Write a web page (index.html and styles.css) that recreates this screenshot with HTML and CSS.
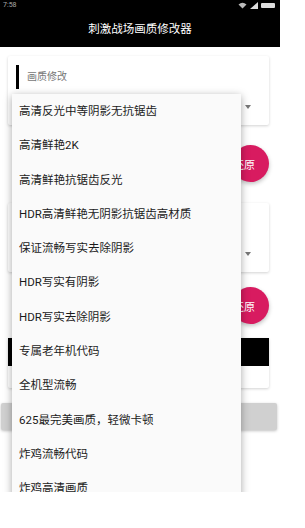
FILE: index.html
```html
<!DOCTYPE html>
<html lang="zh-CN">
<head>
    <meta charset="UTF-8">
    <meta name="viewport" content="width=device-width, initial-scale=1.0">
    <title>刺激战场画质修改器</title>
    <link rel="stylesheet" href="styles.css">
</head>
<body>
    <div class="phone">
        <div class="appbar">
            <div class="status">
                <span class="clock">7:58</span>
                <span class="status-icons">
                    <svg width="9" height="7" viewBox="0 0 9 7"><path d="M0.5 2.5 Q4.5 -1 8.5 2.5 L4.5 6.5 Z" fill="#bbb"/></svg>
                    <svg width="8" height="7" viewBox="0 0 8 7"><path d="M0 7 L8 7 L8 0 Z" fill="#ddd"/></svg>
                    <span class="battery"></span>
                </span>
            </div>
            <div class="title">刺激战场画质修改器</div>
        </div>

        <div class="content">
            <div class="card">
                <div class="card-label">画质修改</div>
                <span class="arrow"></span>
            </div>
            <div class="fab-row fab-row-1">
                <button class="fab">还原</button>
            </div>

            <div class="card card-2">
                <div class="card-label"></div>
                <span class="arrow"></span>
            </div>
            <div class="fab-row fab-row-2">
                <button class="fab">还原</button>
            </div>

            <div class="card card-dark">
                <div class="card-head"></div>
            </div>

            <button class="wide-btn"></button>
        </div>

        <ul class="menu">
            <li>高清反光中等阴影无抗锯齿</li>
            <li>高清鲜艳2K</li>
            <li>高清鲜艳抗锯齿反光</li>
            <li>HDR高清鲜艳无阴影抗锯齿高材质</li>
            <li>保证流畅写实去除阴影</li>
            <li>HDR写实有阴影</li>
            <li>HDR写实去除阴影</li>
            <li>专属老年机代码</li>
            <li>全机型流畅</li>
            <li>625最完美画质，轻微卡顿</li>
            <li>炸鸡流畅代码</li>
            <li>炸鸡高清画质</li>
        </ul>
    </div>
</body>
</html>
```

FILE: styles.css
```css
body {
    margin: 0;
    background: #ffffff;
    font-family: "Roboto", "Noto Sans CJK SC", sans-serif;
}

.phone {
    position: relative;
    width: 280px;
    height: 492px;
    overflow: hidden;
    background: #ffffff;
}

.appbar {
    background: #000000;
    height: 47px;
}

.status {
    display: flex;
    justify-content: space-between;
    align-items: center;
    height: 10px;
    padding: 0 5px 0 3px;
}

.clock {
    color: #aaaaaa;
    font-size: 7px;
    line-height: 10px;
}

.status-icons {
    display: flex;
    align-items: center;
    gap: 3px;
}

.battery {
    width: 14px;
    height: 5px;
    background: #dddddd;
    border-radius: 1px;
}

.title {
    color: #ffffff;
    font-size: 11.5px;
    height: 36px;
    display: flex;
    align-items: center;
    justify-content: center;
}

.content {
    padding: 9px 11px 0 8px;
}

.card {
    background: #ffffff;
    height: 69px;
    box-sizing: border-box;
    padding: 9px 8px 0 8px;
    border-radius: 2px;
    box-shadow: 0 1px 3px rgba(0,0,0,0.18);
    display: flex;
    flex-direction: column;
}

.card-label {
    border-left: 3px solid #000000;
    padding-left: 8px;
    height: 24px;
    line-height: 24px;
    font-size: 10px;
    color: #777777;
}

.arrow {
    align-self: flex-end;
    margin: 16px 10px 0 0;
    width: 0;
    height: 0;
    border-left: 3.5px solid transparent;
    border-right: 3.5px solid transparent;
    border-top: 4px solid #777777;
}

.fab-row {
    display: flex;
    justify-content: flex-end;
}

.fab-row-1 {
    padding: 20px 0 21px;
}

.fab-row-2 {
    padding: 15px 0 14px;
}

.fab {
    width: 37px;
    height: 37px;
    border-radius: 50%;
    border: none;
    padding: 0 0 0 1px;
    background: #d81b60;
    color: #ffffff;
    font-family: "Roboto", "Noto Sans CJK SC", sans-serif;
    font-size: 11px;
    text-align: left;
    box-shadow: 0 2px 4px rgba(0,0,0,0.25);
}

.card-dark {
    height: 50px;
    padding: 0;
}

.card-head {
    background: #000000;
    height: 28px;
}

.wide-btn {
    display: block;
    margin: 15px -8px 0 -7px;
    width: calc(100% + 15px);
    height: 27px;
    border: none;
    border-radius: 2px;
    background: #d0d0d0;
    box-shadow: 0 1px 3px rgba(0,0,0,0.25);
}

.menu {
    position: absolute;
    left: 12px;
    top: 94px;
    width: 229px;
    margin: 0;
    padding: 0;
    list-style: none;
    background: #fafafa;
    box-shadow: 0 2px 8px rgba(0,0,0,0.35);
}

.menu li {
    height: 34.3px;
    line-height: 34.3px;
    padding-left: 7px;
    font-size: 11.5px;
    color: #1a1a1a;
    white-space: nowrap;
}
```
